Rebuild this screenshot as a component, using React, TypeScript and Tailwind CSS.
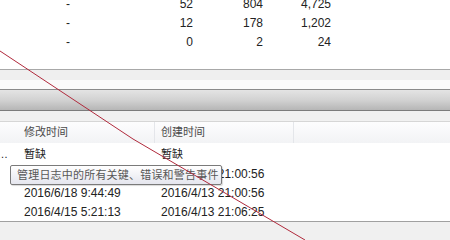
import React from 'react';

const topRows = [
  { a: '52', b: '804', c: '4,725' },
  { a: '12', b: '178', c: '1,202' },
  { a: '0', b: '2', c: '24' },
];

const logRows = [
  { lead: '…', mod: '暂缺', created: '暂缺', cjk: true },
  { lead: '', mod: '', created: '2016/4/13 21:00:56', cjk: false },
  { lead: '', mod: '2016/6/18 9:44:49', created: '2016/4/13 21:00:56', cjk: false },
  { lead: '', mod: '2016/4/15 5:21:13', created: '2016/4/13 21:06:25', cjk: false },
];

export default function App() {
  return (
    <div className="relative w-[450px] h-[240px] overflow-hidden bg-white text-[12px] text-[#222] font-['Liberation_Sans','Noto_Sans_CJK_SC',sans-serif]">
      {/* Summary table (scrolled) */}
      <div className="-mt-[6px]">
        {topRows.map((r, i) => (
          <div key={i} className="flex h-[19px] items-center">
            <div className="w-[66px]" />
            <div className="w-[4px]">-</div>
            <div className="w-[123px] text-right">{r.a}</div>
            <div className="w-[70px] text-right">{r.b}</div>
            <div className="w-[68px] text-right">{r.c}</div>
          </div>
        ))}
      </div>
      <div className="h-[18px]" />

      {/* Splitter / pane header */}
      <div className="h-px bg-[#a8a8a8]" />
      <div className="h-[10px] bg-[#efefef]" />
      <div className="h-[9px] bg-[#fafafa]" />
      <div className="h-px bg-[#8a8a8a]" />
      <div className="h-[20px] bg-gradient-to-b from-[#e4e4e4] via-[#d2d2d2] to-[#b6b6b6]" />
      <div className="h-px bg-[#7c7c7c]" />
      <div className="h-[10px] bg-[#f1f1f1]" />
      <div className="h-px bg-[#d6d6d6]" />

      {/* Column header */}
      <div className="flex h-[21px] items-center bg-gradient-to-b from-[#fdfdfe] to-[#f2f3f5] text-[11px] text-[#4a4a4a]">
        <div className="w-[24px]" />
        <div className="w-[130px]">修改时间</div>
        <div className="h-full w-px bg-[#e4e6ea]" />
        <div className="w-[6px]" />
        <div className="w-[132px]">创建时间</div>
        <div className="h-full w-px bg-[#e4e6ea]" />
      </div>
      <div className="h-[2px]" />

      {/* Rows */}
      {logRows.map((r, i) => (
        <div key={i} className={`flex h-[19px] items-center ${r.cjk ? 'text-[11px]' : ''}`}>
          <div className="w-[24px] -ml-[3px]">{r.lead}</div>
          <div className="w-[140px] pl-[3px]">{r.mod}</div>
          <div>{r.created}</div>
        </div>
      ))}
      <div className="h-px bg-[#a0a0a0]" />
      <div className="h-[30px] bg-[#f0f0f0]" />

      {/* Tooltip */}
      <div className="absolute left-[10px] top-[165px] flex h-[20px] w-[212px] items-center rounded-[2px] border border-[#7a7a7a] bg-gradient-to-b from-white to-[#e5e6ee] pl-[6px] text-[11px] tracking-[0.2px] text-[#575757] shadow-[1px_1px_1px_rgba(0,0,0,0.15)]">
        管理日志中的所有关键、错误和警告事件
      </div>

      {/* Red annotation stroke */}
      <svg className="pointer-events-none absolute inset-0" width="450" height="240">
        <polyline points="0,51 133,139 288,230 305,240" fill="none" stroke="#b02a3c" strokeWidth="1" />
      </svg>
    </div>
  );
}
